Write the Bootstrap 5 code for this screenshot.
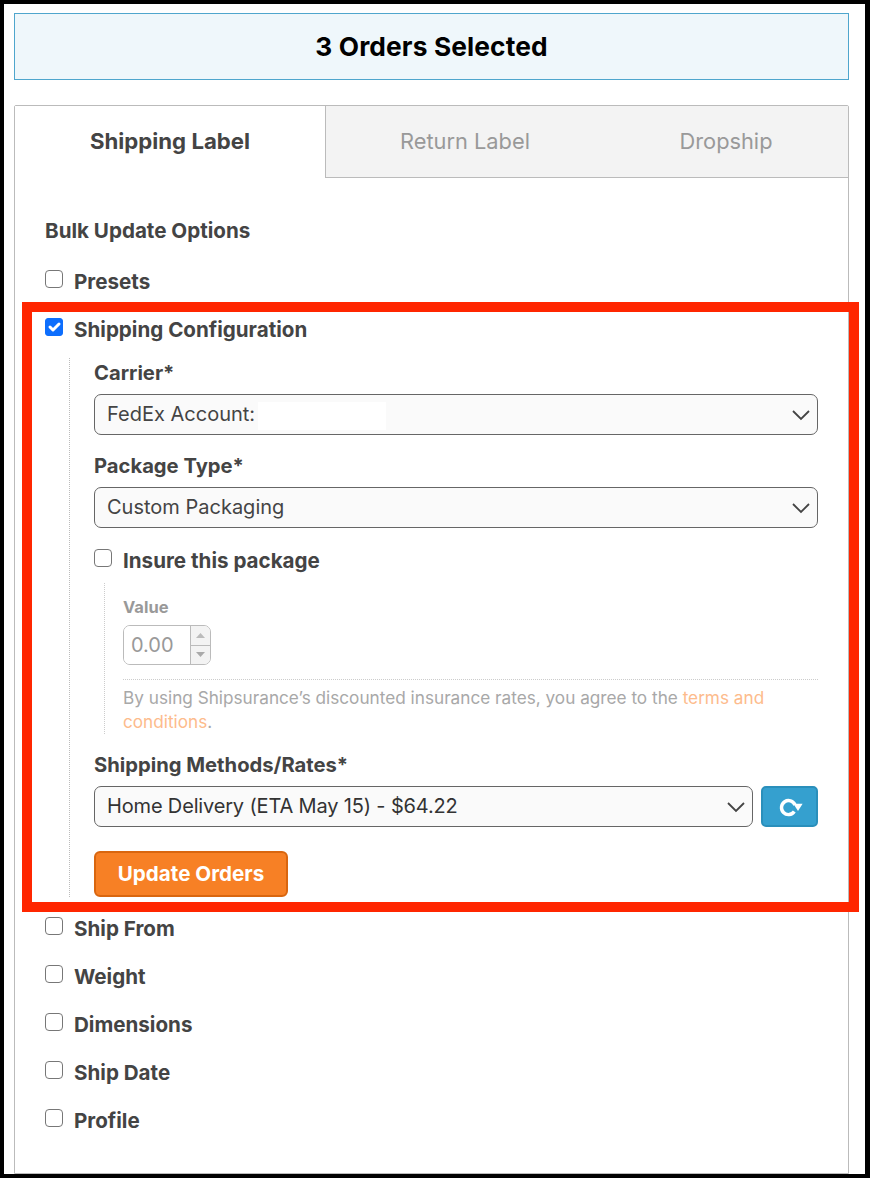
<!DOCTYPE html>
<html lang="en">
<head>
<meta charset="utf-8">
<title>Bulk update</title>
<link href="https://cdn.jsdelivr.net/npm/bootstrap@5.3.0/dist/css/bootstrap.min.css" rel="stylesheet">
<style>
html,body{height:100%;margin:0;background:#fff}
body{font-family:Inter,"Liberation Sans",sans-serif;color:#444}
.frame{position:relative;width:870px;height:1178px;border:solid #000;border-width:4px 5px 4px 4px;padding:9px 16px 0 10px;overflow:hidden}
.sel-banner{height:67px;background:#eff7fb;border:1px solid #4fa6cd;color:#000;font-size:26.300px;font-weight:700}
.sel-banner h1{font:inherit;margin:0;letter-spacing:.13px}
.panel-box{margin-top:25px;height:1069px;border:1px solid #bbb;border-radius:2px 2px 0 0}
.tab-row{height:72px}
.tab-item{display:flex;align-items:center;justify-content:center;font-size:21.800px;color:#999;background:#f3f3f3;border-bottom:1px solid #bbb;padding-bottom:1px}
.tab-active{width:311px;color:#444;font-weight:700;font-size:22.200px;background:#fff;border-right:1px solid #bbb;border-bottom:0;padding-bottom:2px}
.tab-ret{width:278px}
.tab-drop{flex:1}
.panel-body{padding:41px 30px 0 30px}
.opt-label{font-size:20.600px;font-weight:700;line-height:24px;color:#444;margin:0}
.opt-row{display:flex;gap:11px;height:24px;margin:0}
.opt-row .form-check-input{width:18px;height:18px;margin:0;flex:none;border:1px solid #777;border-radius:4px;background-color:#fff;margin-top:0}
.opt-row .form-check-input:checked{background-color:#0d6efd;border-color:#0d6efd;border-radius:3px;background-size:20px 20px}
.gap-head{margin-top:27px}
.gap-opt{margin-top:24px}
.nest{margin:16px 0 0 24px;padding-left:24px;border-left:1px dotted #bbb;height:539px}
.nest .first-lab{padding-top:3px}
.field-lab{font-size:20.200px}
.pick{height:41px;font-size:20px;font-family:inherit;color:#444;background-color:#fafafa;border:1px solid #666;border-radius:7px;padding:0 40px 0 12px;line-height:39px;background-position:right 6px center;background-size:20px 14px;background-image:url("data:image/svg+xml,%3csvg xmlns='http://www.w3.org/2000/svg' viewBox='0 0 20 14'%3e%3cpath fill='none' stroke='%23444' stroke-width='1.800' d='M2 3l8 8 8-8'/%3e%3c/svg%3e")}
.pick-dark{color:#333;letter-spacing:-.16px}
.wrap-pick{position:relative;margin-top:9px}
.redact{position:absolute;left:164px;top:8px;width:128px;height:28px;background:#fff}
.mt-lab{margin-top:19px}
.mt-ins{margin-top:21px}
.insure-wrap{margin:10px 0 0 10px;padding-left:18px;border-left:1px dotted #ccc;height:151px}
.val-lab{display:block;font-size:16.500px;font-weight:700;line-height:20px;color:#999;padding-top:14px;margin:0}
.num-box{display:inline-flex;width:88px;height:40px;margin-top:8px;border:1px solid #bbb;border-radius:7px;overflow:hidden;background:#fff}
.num-box input{width:66px;border:0;background:#fff;padding:0 7px;font-size:20px;color:#999;font-family:inherit;outline:0}
.spin-col{flex:1;display:flex;flex-direction:column;border-left:1px solid #bbb;background:#f3f3f3}
.spin-col span{flex:1;display:flex;align-items:center;justify-content:center}
.spin-col span+span{border-top:1px solid #bbb}
.dot-line{border-top:1px dotted #ccc;margin-top:14px}
.terms{font-size:17.200px;line-height:24px;color:#a8a8a8;margin:6px 0 0}
.terms a{color:#fdbb8c;text-decoration:none}
.refresh-btn{width:57px;height:41px;padding:0;flex:none;background:#35a0cf;border:2px solid #2a8fbb;border-radius:5px;display:flex;align-items:center;justify-content:center}
.refresh-btn:hover{background:#35a0cf;border-color:#2a8fbb}
.go-btn{width:194px;height:46px;margin-top:24px;background:#f78025;border:2px solid #d9660f;border-radius:6px;color:#fff;font-size:20.600px;font-weight:700;padding:0;display:block}
.go-btn:hover{background:#f78025;border-color:#d9660f;color:#fff}
.red-mark{position:absolute;left:18px;top:298px;width:837px;height:610px;border:10px solid #ff2600;pointer-events:none}
.after-nest{margin-top:20px}
</style>
</head>
<body>
<div class="frame">
  <div class="sel-banner d-flex align-items-center justify-content-center"><h1>3 Orders Selected</h1></div>

  <div class="panel-box">
    <div class="tab-row d-flex">
      <div class="tab-item tab-active">Shipping Label</div>
      <div class="tab-item tab-ret">Return Label</div>
      <div class="tab-item tab-drop">Dropship</div>
    </div>
    <div class="panel-body">
      <div class="opt-label">Bulk Update Options</div>
      <label class="opt-row opt-label gap-head"><input class="form-check-input" type="checkbox"><span>Presets</span></label>
      <label class="opt-row opt-label gap-opt"><input class="form-check-input" type="checkbox" checked><span>Shipping Configuration</span></label>

      <div class="nest">
        <div class="opt-label field-lab first-lab">Carrier*</div>
        <div class="wrap-pick">
          <select class="form-select pick"><option>FedEx Account:</option></select>
          <span class="redact"></span>
        </div>
        <div class="opt-label field-lab mt-lab">Package Type*</div>
        <div class="wrap-pick">
          <select class="form-select pick"><option>Custom Packaging</option></select>
        </div>
        <label class="opt-row opt-label mt-ins"><input class="form-check-input" type="checkbox"><span>Insure this package</span></label>
        <div class="insure-wrap">
          <label class="val-lab">Value</label>
          <div class="num-box">
            <input type="text" value="0.00" disabled>
            <div class="spin-col">
              <span><svg width="9" height="5" viewBox="0 0 9 5"><path d="M4.5 0 9 5H0z" fill="#bbb"/></svg></span>
              <span><svg width="9" height="5" viewBox="0 0 9 5"><path d="M4.5 5 0 0h9z" fill="#aaa"/></svg></span>
            </div>
          </div>
          <div class="dot-line"></div>
          <p class="terms">By using Shipsurance’s discounted insurance rates, you agree to the <a href="#">terms and conditions</a>.</p>
        </div>
        <div class="opt-label field-lab mt-lab">Shipping Methods/Rates*</div>
        <div class="d-flex gap-2 wrap-pick">
          <select class="form-select pick pick-dark"><option>Home Delivery (ETA May 15) - $64.22</option></select>
          <button class="btn refresh-btn" type="button" aria-label="Refresh">
            <svg width="26" height="20" viewBox="0 0 26 20"><path d="M18 8A7 7 0 1 0 17.300 14.500" fill="none" stroke="#fff" stroke-width="3.400"/><path d="M16.400 6.800h9.200l-4.600 7.200z" fill="#fff"/></svg>
          </button>
        </div>
        <button class="btn go-btn" type="button">Update Orders</button>
      </div>

      <label class="opt-row opt-label after-nest"><input class="form-check-input" type="checkbox"><span>Ship From</span></label>
      <label class="opt-row opt-label gap-opt"><input class="form-check-input" type="checkbox"><span>Weight</span></label>
      <label class="opt-row opt-label gap-opt"><input class="form-check-input" type="checkbox"><span>Dimensions</span></label>
      <label class="opt-row opt-label gap-opt"><input class="form-check-input" type="checkbox"><span>Ship Date</span></label>
      <label class="opt-row opt-label gap-opt"><input class="form-check-input" type="checkbox"><span>Profile</span></label>
    </div>
  </div>
  <div class="red-mark"></div>
</div>
<script src="https://cdn.jsdelivr.net/npm/bootstrap@5.3.0/dist/js/bootstrap.bundle.min.js"></script>
</body>
</html>
